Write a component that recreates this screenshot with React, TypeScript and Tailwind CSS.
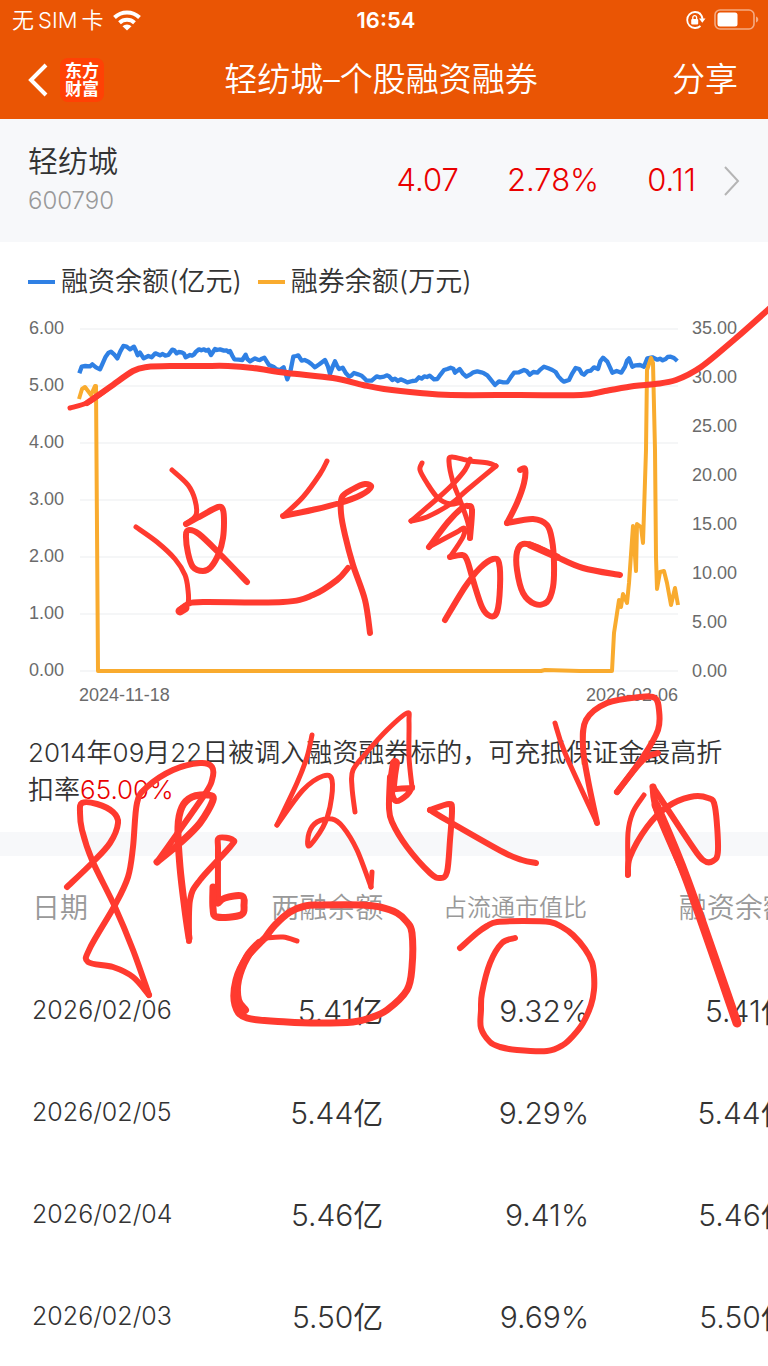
interface Stroke {
  width: number
  points: string
}

interface Row {
  date: string
  total: string
  ratio: string
  balance: string
}

const rows: Row[] = [
  { date: "2026/02/06", total: "5.41亿", ratio: "9.32%", balance: "5.41亿" },
  { date: "2026/02/05", total: "5.44亿", ratio: "9.29%", balance: "5.44亿" },
  { date: "2026/02/04", total: "5.46亿", ratio: "9.41%", balance: "5.46亿" },
  { date: "2026/02/03", total: "5.50亿", ratio: "9.69%", balance: "5.50亿" },
]

const leftTicks = ["6.00", "5.00", "4.00", "3.00", "2.00", "1.00", "0.00"]
const rightTicks = ["35.00", "30.00", "25.00", "20.00", "15.00", "10.00", "5.00", "0.00"]

// 融资余额, three units per chart pixel
const marginLine =
  "238,370 245,350 256,348 270,349 277,343 288,352 300,358 308,340 317,320 325,309 333,305 343,314 352,325 361,304 370,288 380,290 390,298 402,290 408,303 413,316 420,308 431,325 445,318 455,322 466,310 480,316 488,312 496,317 505,315 517,299 523,301 530,310 536,306 545,307 552,311 557,322 570,315 576,317 582,313 588,305 597,298 604,301 612,298 618,302 625,299 633,315 645,297 651,300 660,298 672,302 680,301 686,306 690,303 697,317 703,328 715,329 727,330 737,314 742,327 750,334 765,325 773,329 780,330 786,326 793,323 800,334 807,345 820,350 828,357 840,360 851,352 857,372 862,388 872,360 880,320 888,318 895,316 905,332 914,330 925,335 934,342 945,352 958,343 975,330 984,350 990,372 998,350 1005,334 1010,345 1017,357 1028,353 1038,370 1048,380 1055,376 1062,369 1074,373 1085,377 1093,385 1100,392 1115,392 1122,386 1130,379 1140,382 1152,380 1160,376 1167,379 1177,390 1185,386 1194,393 1202,388 1214,393 1222,397 1237,393 1247,392 1257,382 1265,386 1273,379 1281,381 1289,377 1302,388 1312,387 1322,373 1332,360 1342,357 1352,353 1360,356 1365,368 1379,357 1388,370 1399,380 1410,374 1420,367 1432,364 1444,367 1452,370 1462,376 1470,386 1485,405 1497,394 1510,397 1522,397 1532,382 1542,368 1557,367 1572,360 1581,364 1589,374 1600,366 1612,368 1622,358 1632,350 1645,355 1657,360 1667,366 1675,379 1684,389 1692,395 1707,390 1717,370 1727,354 1738,357 1745,370 1752,374 1762,364 1772,362 1782,352 1794,357 1801,334 1809,323 1822,335 1830,352 1837,368 1850,363 1864,368 1875,350 1881,332 1887,325 1897,350 1907,346 1920,345 1932,350 1942,325 1957,322 1972,329 1980,326 1988,331 1997,327 2003,321 2012,320 2022,324 2032,333"

// 融券余额
const shortLine =
  "79,399 82,389 85,387 88,391 91,395 95,386 96,386 98,671 541,671 545,670 580,671 612,671 614,633 616,620 619,600 621,607 623,594 627,603 629,583 633,526 636,571 637,524 641,527 643,543 646,450 647,370 651,358 653,363 655,450 656,557 657,589 660,572 664,571 667,583 671,605 675,588 678,605"

const strokes: Stroke[] = [
  { width: 5, points: "70,408 87,403 98,396 110,387" },
  { width: 6, points: "87,403 110,387 133,371 147,367 175,366 203,366 228,366 253,368 287,373 333,378 363,385 384,389 420,393 451,395 520,395 581,395 605,391 634,386 655,384 676,380 701,367 735,339 770,308" },

  { width: 5, points: "172,470 188,485 195,500 196,515 186,524" },
  { width: 6, points: "186,524 199,517 218,507 223,510 224,522 223,538 219,553 211,567 203,571 193,567 188,553 186,535 189,530 199,534 219,553 247,582" },
  { width: 5, points: "136,527 157,542 175,559 185,575 188,590 188,603 181,611" },
  { width: 9, points: "185,608 180,611" },
  { width: 6, points: "181,609 188,604 203,602 283,602 313,595 337,580 348,568" },
  { width: 5, points: "327,461 320,474 303,497 283,516" },
  { width: 6, points: "283,516 312,510 340,503 361,495 371,487 365,484 353,489 342,497 341,513 345,535 353,565 365,600 370,633" },

  { width: 5, points: "422,463 420,470 427,483 438,498 450,504 458,503" },
  { width: 5, points: "470,459 465,470 453,484 438,498 411,521" },
  { width: 5, points: "411,521 427,517 452,503 467,490 496,466" },
  { width: 5, points: "496,466 488,463 470,461 452,457 449,462 453,482 460,500 468,523 470,538" },
  { width: 6, points: "470,538 472,510 468,506 462,508 448,522 429,547" },
  { width: 5, points: "429,547 440,541 457,532 464,528 463,537 450,557" },
  { width: 6, points: "450,557 462,555 467,560 473,580 482,607 490,616 497,612 500,587 499,563 493,559 480,568 465,587 445,620" },
  { width: 6, points: "520,470 525,469 524,483 517,503 507,523" },
  { width: 6, points: "507,523 533,519 547,525 552,540 554,563 553,587 547,602 535,604 523,593 517,570 517,552 523,544 537,547 557,557 583,568 620,575" },
  { width: 7, points: "530,545 557,557" },

  { width: 6, points: "67,887 92,863 110,843 118,823 113,812 97,804 82,803 80,813 82,830 92,860 115,907 133,950 149,995" },
  { width: 6, points: "149,995 133,977 113,967 88,962 90,948 115,905 128,877 133,847 137,803 147,787 173,770 200,763 212,767 212,780 203,797 157,862" },
  { width: 7, points: "157,862 180,843 200,823 213,800 208,795 192,797 182,807 178,827 180,867 185,910 189,938" },
  { width: 6, points: "189,941 190,900 200,880 230,847 233,840 219,838 218,850 218,903" },
  { width: 7, points: "218,903 225,898 242,896 244,905 241,915 217,917 213,908 213,887" },

  { width: 5, points: "312,735 307,757 297,783 277,825" },
  { width: 5, points: "277,825 303,790 323,776 332,780 330,807 323,827 309,846 309,833 317,822 332,819 343,827 357,850 371,887" },
  { width: 5, points: "371,887 372,872" },
  { width: 5, points: "355,812 352,787 353,770 367,752 387,730 407,713 409,722 409,757 412,787" },
  { width: 6, points: "412,787 407,795 396,801 393,790 412,788" },
  { width: 10, points: "395,763 393,776 392,786" },
  { width: 6, points: "390,777 389,807 392,822 407,847 430,873 440,878 447,872 450,840 452,810 449,804 430,810" },
  { width: 6, points: "430,810 450,822 503,852 522,860 536,863" },

  { width: 5, points: "555,723 565,753 597,823" },
  { width: 6, points: "597,823 588,780 583,747 586,720 607,703 640,697 655,698 659,710 658,730 643,757 617,792" },
  { width: 6, points: "617,792 643,760 658,753" },
  { width: 5, points: "644,795 633,812 628,833 628,875" },
  { width: 6, points: "628,875 630,857 647,827 667,807 690,797 708,798 715,807 718,850 713,861 703,860 690,843 653,787" },
  { width: 7, points: "653,787 658,813 687,880" },
  { width: 9, points: "656,805 687,880 737,1023" },

  { width: 5, points: "297,941 283,937 265,938" },
  { width: 8, points: "259,943 247,957 238,980 238,1000 245,1010" },
  { width: 7, points: "265,938 275,925 290,912 305,906 320,905 363,905 380,907 397,913 407,922 412,933 412,967 407,990 387,1010 370,1018 353,1022 320,1023 287,1022 247,1018 235,1005 236,980 247,957 265,938" },
  { width: 6, points: "460,948 477,933 487,926 497,922 523,921 550,922 562,927 573,935 585,949 592,962 594,975 594,990 591,1005 583,1023 573,1036 563,1045 547,1051 517,1050 500,1047 490,1042 481,1028 481,1010 482,993 490,963 502,943 515,938" },
]

// Turns a list of points into a smooth curve through all of them
function smoothPath(points: string) {
  const p = points.split(" ").map((s) => s.split(",").map(Number))
  let d = `M${p[0][0]} ${p[0][1]}`
  for (let i = 0; i < p.length - 1; i++) {
    const a = p[i - 1] || p[i]
    const b = p[i]
    const c = p[i + 1]
    const e = p[i + 2] || c
    d += ` C${b[0] + (c[0] - a[0]) / 6} ${b[1] + (c[1] - a[1]) / 6} ${c[0] - (e[0] - b[0]) / 6} ${c[1] - (e[1] - b[1]) / 6} ${c[0]} ${c[1]}`
  }
  return d
}

function StatusBar() {
  return (
    <div className="flex h-10 items-center justify-between pr-2 pl-3 text-[22px] leading-10">
      <div className="flex flex-1 items-center gap-2">
        <span className="flex gap-1">
          <span>无</span>
          <span>SIM</span>
          <span>卡</span>
        </span>
        <svg width="30" height="22" viewBox="0 0 30 22" fill="none" stroke="currentColor" strokeWidth="4">
          <path d="M2.5 8.5a18 18 0 0 1 25 0" />
          <path d="M7.5 13.8a11 11 0 0 1 15 0" />
          <path d="M15 21.5l-4.5-4.3a6.5 6.5 0 0 1 9 0z" fill="currentColor" stroke="none" />
        </svg>
      </div>
      <span className="font-semibold">16:54</span>
      <div className="flex flex-1 items-center justify-end gap-2">
        <svg width="21" height="20" viewBox="0 0 21 20" fill="none" stroke="currentColor" strokeWidth="1.8">
          <path d="M15.5 4a8 8 0 1 0 0 12" />
          <path d="M14.5 3.2a8 8 0 0 1 3 6" />
          <path d="M14 8.5h6.5l-3.2 4.2z" fill="currentColor" stroke="none" />
          <rect x="6.2" y="9" width="7" height="5.6" rx="1" fill="currentColor" stroke="none" />
          <path d="M7.8 9V7.5a1.9 1.9 0 0 1 3.8 0V9" strokeWidth="1.3" />
        </svg>
        <svg width="46" height="22" viewBox="0 0 46 22">
          <rect x="1" y="1" width="39" height="19" rx="5" fill="none" stroke="white" strokeOpacity="0.5" strokeWidth="1.6" />
          <rect x="3.5" y="3.5" width="20" height="14" rx="2.5" fill="white" />
          <path d="M42 7.5c3 1 3 5 0 6z" fill="white" fillOpacity="0.5" />
        </svg>
      </div>
    </div>
  )
}

function NavBar() {
  return (
    <div className="flex h-[79px] items-center justify-between px-6 text-[33px]">
      <div className="flex flex-1 items-center gap-2">
        <button aria-label="返回" className="flex w-7 justify-center">
          <svg width="20" height="34" viewBox="0 0 20 34" fill="none" stroke="currentColor" strokeWidth="4">
            <path d="M18 2L3 17l15 15" />
          </svg>
        </button>
        <div className="flex h-11 w-11 flex-col items-center justify-center rounded-lg bg-[#ff4105] text-[17px] leading-[18px] font-bold">
          <span>东方</span>
          <span>财富</span>
        </div>
      </div>
      <h1>轻纺城–个股融资融券</h1>
      <div className="flex flex-1 justify-end pr-1.5">
        <button>分享</button>
      </div>
    </div>
  )
}

function Chart() {
  return (
    <svg viewBox="0 310 768 400" className="block w-full" fontFamily="Liberation Sans, Arial, sans-serif" fontSize="18" fontWeight="400" fill="#6b6b6b">
      {leftTicks.map((t, i) => (
        <g key={t}>
          <line x1="80" x2="678" y1={329 + i * 57} y2={329 + i * 57} stroke="#f2f3f5" strokeWidth="1.5" />
          <text x="29" y={334 + i * 57}>{t}</text>
        </g>
      ))}
      {rightTicks.map((t, i) => (
        <text key={t} x="692" y={334 + i * 49}>{t}</text>
      ))}
      <text x="79" y="701">2024-11-18</text>
      <text x="678" y="701" textAnchor="end">2026-02-06</text>
      <g transform="translate(0 250) scale(0.33333)">
        <polyline points={marginLine} fill="none" stroke="#2f80e4" strokeWidth="13" strokeLinejoin="round" />
      </g>
      <polyline points={shortLine} fill="none" stroke="#f9ab2e" strokeWidth="4" strokeLinejoin="round" />
    </svg>
  )
}

function Ink() {
  return (
    <svg viewBox="0 0 768 1366" className="pointer-events-none absolute top-0 left-0 w-full" fill="none" stroke="#ff3a2f" strokeLinecap="round" strokeLinejoin="round">
      {strokes.map((s, i) => (
        <path key={i} d={smoothPath(s.points)} strokeWidth={s.width} />
      ))}
    </svg>
  )
}

export default function App() {
  return (
    <div className="relative flex h-screen flex-col overflow-hidden bg-white font-['Inter','Noto_Sans_CJK_SC',sans-serif] font-[350] text-[#333]">
      <header className="bg-[#ea5504] text-white">
        <StatusBar />
        <NavBar />
      </header>

      <section className="flex h-[123px] items-center justify-between bg-[#f7f8fa] px-7">
        <div>
          <div className="text-[30px] leading-10">轻纺城</div>
          <div className="text-[24px] leading-10 text-[#999]">600790</div>
        </div>
        <a href="#quote" className="flex items-center text-[31px] text-[#ea0000]">
          <span>4.07</span>
          <span className="ml-12">2.78%</span>
          <span className="ml-12">0.11</span>
          <svg width="16" height="30" viewBox="0 0 16 30" fill="none" stroke="#b5b5b5" strokeWidth="2" className="ml-7">
            <path d="M1 1l13 14L1 29" />
          </svg>
        </a>
      </section>

      {/* 图例 */}
      <div className="flex h-17 items-center gap-4 px-7 pt-3 text-[27px]">
        <div className="flex items-center gap-1.5">
          <span className="h-1 w-[27px] bg-[#2f80e4]" />
          融资余额(亿元)
        </div>
        <div className="flex items-center gap-1.5">
          <span className="h-1 w-[27px] bg-[#f9ab2e]" />
          融券余额(万元)
        </div>
      </div>

      <Chart />

      <p className="px-7 py-6 text-[26px] leading-[37px]">
        2014年09月22日被调入融资融券标的，可充抵保证金最高折扣率<span className="text-[#ea0000]">65.00%</span>
      </p>

      <div className="h-6 shrink-0 bg-[#f7f8fa]" />

      {/* 明细 */}
      <div className="min-h-0 flex-1 overflow-hidden">
        <table className="w-[104%] table-fixed text-right">
          <thead>
            <tr className="h-[104px] text-[28px] text-[#999]">
              <th className="w-[26%] pl-8 text-left font-[350]">日期</th>
              <th className="w-[22%] font-[350]">两融余额</th>
              <th className="w-[26%] pr-1 text-[24px] font-[350]">占流通市值比</th>
              <th className="w-[26%] pr-2 font-[350]">融资余额</th>
            </tr>
          </thead>
          <tbody className="text-[30px]">
            {rows.map((r) => (
              <tr key={r.date} className="h-[102px]">
                <td className="pl-8 text-left text-[25px]">{r.date}</td>
                <td>{r.total}</td>
                <td className="pr-0.5">{r.ratio}</td>
                <td className="pr-2">{r.balance}</td>
              </tr>
            ))}
          </tbody>
        </table>
      </div>

      <Ink />
    </div>
  )
}
